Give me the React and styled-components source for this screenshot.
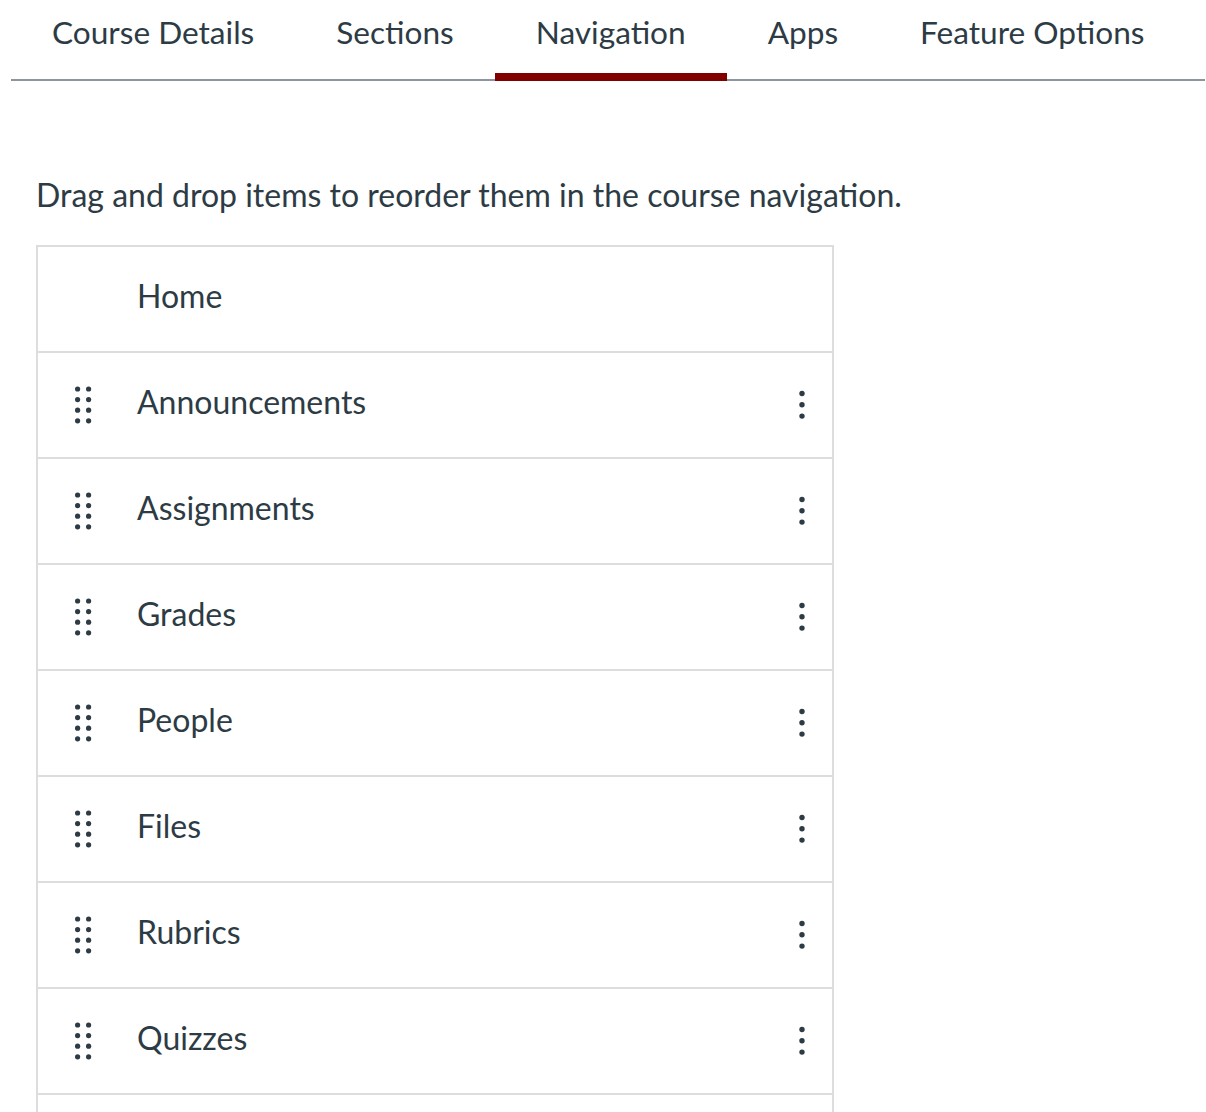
import React from 'react'
import styled, { createGlobalStyle } from 'styled-components'

const GlobalStyle = createGlobalStyle`
  html, body {
    margin: 0;
    padding: 0;
    background: #fff;
  }
  body {
    font-family: Lato, "Liberation Sans", sans-serif;
    color: #2d3b45;
  }
`

const Page = styled.div`
  width: 1206px;
  height: 1112px;
  overflow: hidden;
`

const TabBar = styled.div`
  display: flex;
  margin: 0 1px 0 11px;
  border-bottom: 2px solid #8b969e;
`

const Tab = styled.div`
  position: relative;
  padding: 12px 41px 27px;
  font-size: 31.6px;
  line-height: 40px;
  color: #2d3b45;
  white-space: nowrap;

  &::after {
    content: '';
    position: absolute;
    left: 0;
    right: 0;
    bottom: -2px;
    height: ${p => (p.$active ? '8px' : '0')};
    background: #800000;
  }
`

const Content = styled.div`
  padding: 95px 0 0 36px;
`

const Intro = styled.p`
  margin: 0 0 31px;
  font-size: 32px;
  line-height: 38px;
`

const List = styled.ul`
  list-style: none;
  margin: 0;
  padding: 0;
  width: 794px;
  border: 2px solid #dddddd;
  border-bottom: none;
`

const Row = styled.li`
  display: flex;
  align-items: center;
  height: 104px;
  border-bottom: 2px solid #dddddd;
  padding: 0 17px 0 37px;
`

const Handle = styled.div`
  width: 62px;
  display: flex;
  align-items: center;
`

const Label = styled.span`
  flex: 1;
  font-size: 32px;
  line-height: 38px;
  padding-bottom: 6px;
  color: #2d3b45;
`

const Kebab = styled.div`
  width: 26px;
  display: flex;
  justify-content: center;
`

const DragIcon = () => (
  <svg width="17" height="38" viewBox="0 0 17 38" aria-hidden="true">
    {[0, 1, 2, 3].map(r =>
      [0, 1].map(c => (
        <circle key={`${r}-${c}`} cx={2.6 + c * 11} cy={3 + r * 10.6} r="2.6" fill="#2d3b45" />
      ))
    )}
  </svg>
)

const MoreIcon = () => (
  <svg width="6" height="30" viewBox="0 0 6 30" aria-hidden="true">
    {[0, 1, 2].map(i => (
      <circle key={i} cx="3" cy={3.5 + i * 11.3} r="2.7" fill="#2d3b45" />
    ))}
  </svg>
)

const tabs = ['Course Details', 'Sections', 'Navigation', 'Apps', 'Feature Options']
const items = ['Announcements', 'Assignments', 'Grades', 'People', 'Files', 'Rubrics', 'Quizzes', 'Modules']

const App = () => {
  return (
    <Page>
      <GlobalStyle />
      <TabBar>
        {tabs.map(t => (
          <Tab key={t} $active={t === 'Navigation'}>{t}</Tab>
        ))}
      </TabBar>
      <Content>
        <Intro>Drag and drop items to reorder them in the course navigation.</Intro>
        <List>
          <Row>
            <Handle />
            <Label>Home</Label>
          </Row>
          {items.map(item => (
            <Row key={item}>
              <Handle><DragIcon /></Handle>
              <Label>{item}</Label>
              <Kebab><MoreIcon /></Kebab>
            </Row>
          ))}
        </List>
      </Content>
    </Page>
  )
}

export default App
